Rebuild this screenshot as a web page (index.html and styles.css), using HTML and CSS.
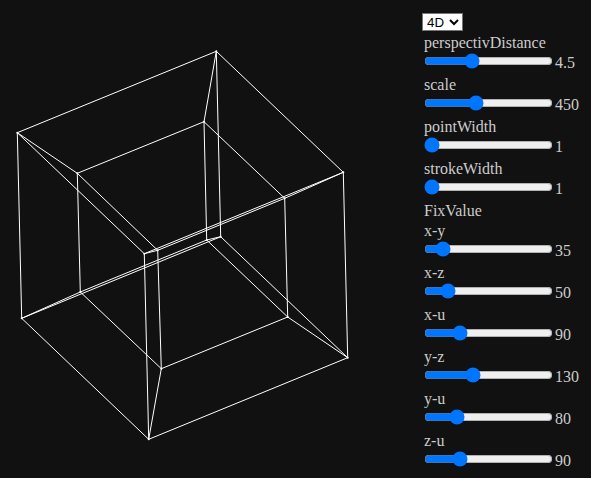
FILE: index.html
```html
<!DOCTYPE html>
<html lang="en">
<head>
<meta charset="utf-8">
<title>Tesseract</title>
<link rel="stylesheet" href="styles.css">
</head>
<body>
<main class="app">
<svg class="stage" viewBox="0 0 422 478" width="422" height="478" aria-label="4D hypercube">
<g class="edges">
<path d="M17.3 132.7L216.3 51.3L343.3 172.3L144.3 253.7Z"/>
<path d="M77.3 173.3L204 121.7L284.7 198.3L157.7 250.3Z"/>
<path d="M21.7 318.3L220.7 236.7L347.7 357.7L148.7 439.3Z"/>
<path d="M80.3 292L206.7 240L287.7 317L161.3 368.7Z"/>
<path d="M17.3 132.7L77.3 173.3M216.3 51.3L204 121.7M343.3 172.3L284.7 198.3M144.3 253.7L157.7 250.3"/>
<path d="M21.7 318.3L80.3 292M220.7 236.7L206.7 240M347.7 357.7L287.7 317M148.7 439.3L161.3 368.7"/>
<path d="M17.3 132.7L21.7 318.3M216.3 51.3L220.7 236.7M343.3 172.3L347.7 357.7M144.3 253.7L148.7 439.3"/>
<path d="M77.3 173.3L80.3 292M204 121.7L206.7 240M284.7 198.3L287.7 317M157.7 250.3L161.3 368.7"/>
</g>
<g class="points">
<circle cx="17.3" cy="132.7" r="1"/><circle cx="216.3" cy="51.3" r="1"/><circle cx="343.3" cy="172.3" r="1"/><circle cx="144.3" cy="253.7" r="1"/>
<circle cx="77.3" cy="173.3" r="1"/><circle cx="204" cy="121.7" r="1"/><circle cx="284.7" cy="198.3" r="1"/><circle cx="157.7" cy="250.3" r="1"/>
<circle cx="21.7" cy="318.3" r="1"/><circle cx="220.7" cy="236.7" r="1"/><circle cx="347.7" cy="357.7" r="1"/><circle cx="148.7" cy="439.3" r="1"/>
<circle cx="80.3" cy="292" r="1"/><circle cx="206.7" cy="240" r="1"/><circle cx="287.7" cy="317" r="1"/><circle cx="161.3" cy="368.7" r="1"/>
</g>
</svg>
<form class="panel">
<select class="mode"><option>4D</option><option>3D</option></select>
<div class="field"><label class="name">perspectivDistance</label><div class="row"><input type="range" min="1" max="11" step="0.1" value="4.5"><span class="val">4.5</span></div></div>
<div class="field"><label class="name">scale</label><div class="row"><input type="range" min="100" max="1000" value="450"><span class="val">450</span></div></div>
<div class="field"><label class="name">pointWidth</label><div class="row"><input type="range" min="1" max="10" value="1"><span class="val">1</span></div></div>
<div class="field"><label class="name">strokeWidth</label><div class="row"><input type="range" min="1" max="10" value="1"><span class="val">1</span></div></div>
<div class="heading">FixValue</div>
<div class="field"><label class="name">x-y</label><div class="row"><input type="range" min="0" max="360" value="35"><span class="val">35</span></div></div>
<div class="field"><label class="name">x-z</label><div class="row"><input type="range" min="0" max="360" value="50"><span class="val">50</span></div></div>
<div class="field"><label class="name">x-u</label><div class="row"><input type="range" min="0" max="360" value="90"><span class="val">90</span></div></div>
<div class="field"><label class="name">y-z</label><div class="row"><input type="range" min="0" max="360" value="130"><span class="val">130</span></div></div>
<div class="field"><label class="name">y-u</label><div class="row"><input type="range" min="0" max="360" value="80"><span class="val">80</span></div></div>
<div class="field"><label class="name">z-u</label><div class="row"><input type="range" min="0" max="360" value="90"><span class="val">90</span></div></div>
</form>
</main>
</body>
</html>
```
FILE: styles.css
```css
html, body {
  margin: 0;
  height: 100%;
  overflow: hidden;
  background: #111111;
}
body {
  font-family: "Liberation Serif", "Times New Roman", serif;
  font-size: 16px;
  color: #cccccc;
}
.app {
  display: flex;
  align-items: flex-start;
}
.stage {
  flex: none;
  display: block;
}
.edges path {
  fill: none;
  stroke: #ffffff;
  stroke-width: 1;
}
.points circle {
  fill: #ffffff;
}
.panel {
  display: flex;
  flex-direction: column;
  align-items: flex-start;
  padding-top: 13px;
}
.mode {
  font-family: "Liberation Sans", Arial, sans-serif;
  font-size: 13.33px;
  width: 41px;
  height: 18px;
  background: #ffffff;
  color: #000000;
  margin-bottom: 2px;
}
.name, .heading {
  display: block;
  margin-left: 2px;
  padding-top: 1px;
  line-height: 18px;
}
.heading {
  margin-bottom: 1px;
}
.row {
  display: flex;
  align-items: flex-start;
  height: 23px;
}
.row input {
  flex: none;
  width: 129px;
  height: 16px;
  margin: 1px 2px 2px;
}
.val {
  margin-top: 2px;
  line-height: 18px;
}
```
